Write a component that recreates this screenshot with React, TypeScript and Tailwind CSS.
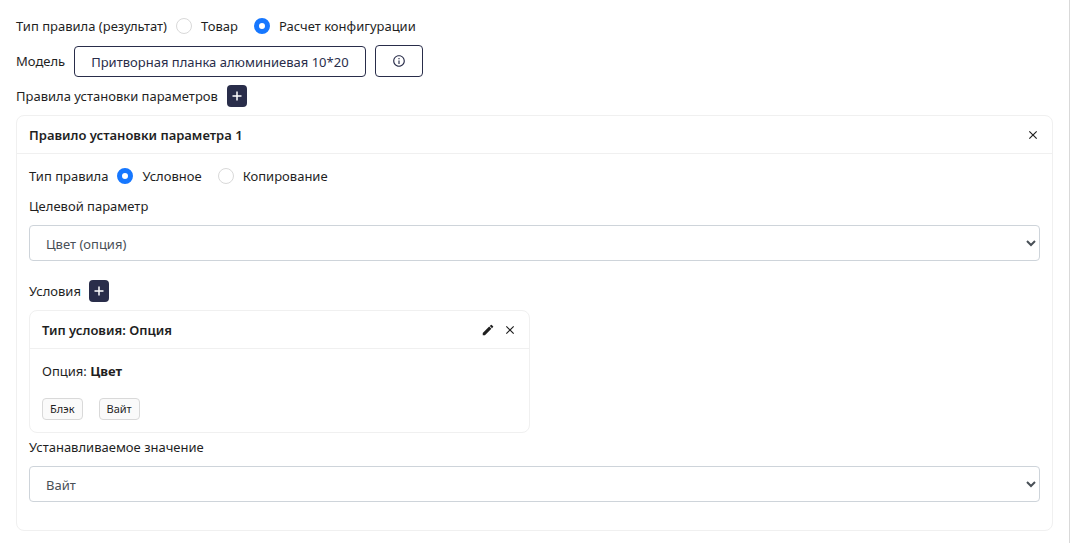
import React, { useState } from "react";
import { MdClose, MdEdit, MdInfoOutline } from "react-icons/md";

interface RadioOption {
  value: string;
  label: string;
}

interface RadioRowProps {
  legend: string;
  name: string;
  options: RadioOption[];
  value: string;
  onChange: (value: string) => void;
}

function RadioRow({ legend, name, options, value, onChange }: RadioRowProps) {
  return (
    <div role="radiogroup" aria-label={legend} className="flex items-center gap-[9px]">
      <span>{legend}</span>
      <div className="flex items-center gap-4">
        {options.map((option) => (
          <label key={option.value} className="flex items-center gap-[9px]">
            <input
              type="radio"
              name={name}
              value={option.value}
              checked={value === option.value}
              onChange={() => onChange(option.value)}
              className="size-4 appearance-none rounded-full border border-[#d9d9d9] bg-white checked:border-5 checked:border-[#1677ff]"
            />
            {option.label}
          </label>
        ))}
      </div>
    </div>
  );
}

function AddButton({ label }: { label: string }) {
  return (
    <button
      type="button"
      aria-label={label}
      className="flex h-[22px] w-5 items-center justify-center rounded bg-[#292d4a] text-white"
    >
      <svg viewBox="0 0 14 14" className="size-3.5" fill="none" stroke="currentColor" strokeWidth="1.5">
        <path d="M7 2.5v9M2.5 7h9" />
      </svg>
    </button>
  );
}

interface SelectFieldProps {
  id: string;
  label: string;
  options: string[];
}

function SelectField({ id, label, options }: SelectFieldProps) {
  return (
    <div className="flex flex-col gap-2">
      <label htmlFor={id}>{label}</label>
      <select
        id={id}
        className="h-9 w-full rounded border border-[#ced4da] bg-white px-3 pt-0.5 text-[#495057]"
      >
        {options.map((option) => (
          <option key={option}>{option}</option>
        ))}
      </select>
    </div>
  );
}

interface CardProps {
  title: string;
  actions: React.ReactNode;
  children: React.ReactNode;
}

function Card({ title, actions, children }: CardProps) {
  return (
    <section className="rounded-lg border border-[#f0f0f0]">
      <header className="flex h-[38px] items-center justify-between border-b border-[#f0f0f0] px-3">
        <h2 className="font-semibold">{title}</h2>
        <div className="flex items-center gap-2">{actions}</div>
      </header>
      {children}
    </section>
  );
}

function IconButton({ label, children }: { label: string; children: React.ReactNode }) {
  return (
    <button type="button" aria-label={label} className="flex size-3.5 items-center justify-center">
      {children}
    </button>
  );
}

export default function App() {
  const [resultType, setResultType] = useState("config");
  const [ruleType, setRuleType] = useState("conditional");

  return (
    <main className="flex min-h-screen flex-col gap-2 border-r border-[#d9d9d9] bg-white px-4 pt-[15px] pb-3 font-['Noto_Sans','Open_Sans',sans-serif] text-[13px] leading-[22px] text-[#1f1f1f]">
      <RadioRow
        legend="Тип правила (результат)"
        name="result-type"
        options={[
          { value: "product", label: "Товар" },
          { value: "config", label: "Расчет конфигурации" },
        ]}
        value={resultType}
        onChange={setResultType}
      />

      <div className="flex items-center gap-[9px]">
        <span>Модель</span>
        <div className="flex items-end gap-[9px]">
          <button
            type="button"
            className="h-[31px] rounded border border-[#292d4a] px-4 text-[#292d4a]"
          >
            Притворная планка алюминиевая 10*20
          </button>
          <button
            type="button"
            aria-label="Информация о модели"
            className="flex h-8 w-12 items-center justify-center rounded border border-[#292d4a] text-[#292d4a]"
          >
            <MdInfoOutline className="size-3.5" />
          </button>
        </div>
      </div>

      <div className="flex items-center gap-[9px]">
        <span>Правила установки параметров</span>
        <AddButton label="Добавить правило" />
      </div>

      <Card
        title="Правило установки параметра 1"
        actions={
          <IconButton label="Удалить правило">
            <MdClose className="size-3.5" />
          </IconButton>
        }
      >
        <div className="flex flex-col gap-2 px-3 pt-[11px] pb-7">
          <RadioRow
            legend="Тип правила"
            name="rule-type"
            options={[
              { value: "conditional", label: "Условное" },
              { value: "copy", label: "Копирование" },
            ]}
            value={ruleType}
            onChange={setRuleType}
          />

          <SelectField
            id="target-param"
            label="Целевой параметр"
            options={["Цвет (опция)"]}
          />

          <div className="flex items-center gap-2 pt-[11px]">
            <span>Условия</span>
            <AddButton label="Добавить условие" />
          </div>

          <div>
            <div className="grid grid-cols-2 gap-2.5 pb-[3px]">
              <Card
                title="Тип условия: Опция"
                actions={
                  <>
                    <IconButton label="Изменить условие">
                      <MdEdit className="size-3.5" />
                    </IconButton>
                    <IconButton label="Удалить условие">
                      <MdClose className="size-3.5" />
                    </IconButton>
                  </>
                }
              >
                <div className="flex flex-col gap-4 px-3 pt-[11px] pb-3">
                  <p>
                    Опция: <strong>Цвет</strong>
                  </p>
                  <div className="flex gap-4 text-[11px] leading-5">
                    {["Блэк", "Вайт"].map((tag) => (
                      <span
                        key={tag}
                        className="rounded border border-[#d9d9d9] bg-[#fafafa] px-[7px]"
                      >
                        {tag}
                      </span>
                    ))}
                  </div>
                </div>
              </Card>
            </div>

            <SelectField
              id="target-value"
              label="Устанавливаемое значение"
              options={["Вайт"]}
            />
          </div>
        </div>
      </Card>
    </main>
  );
}
